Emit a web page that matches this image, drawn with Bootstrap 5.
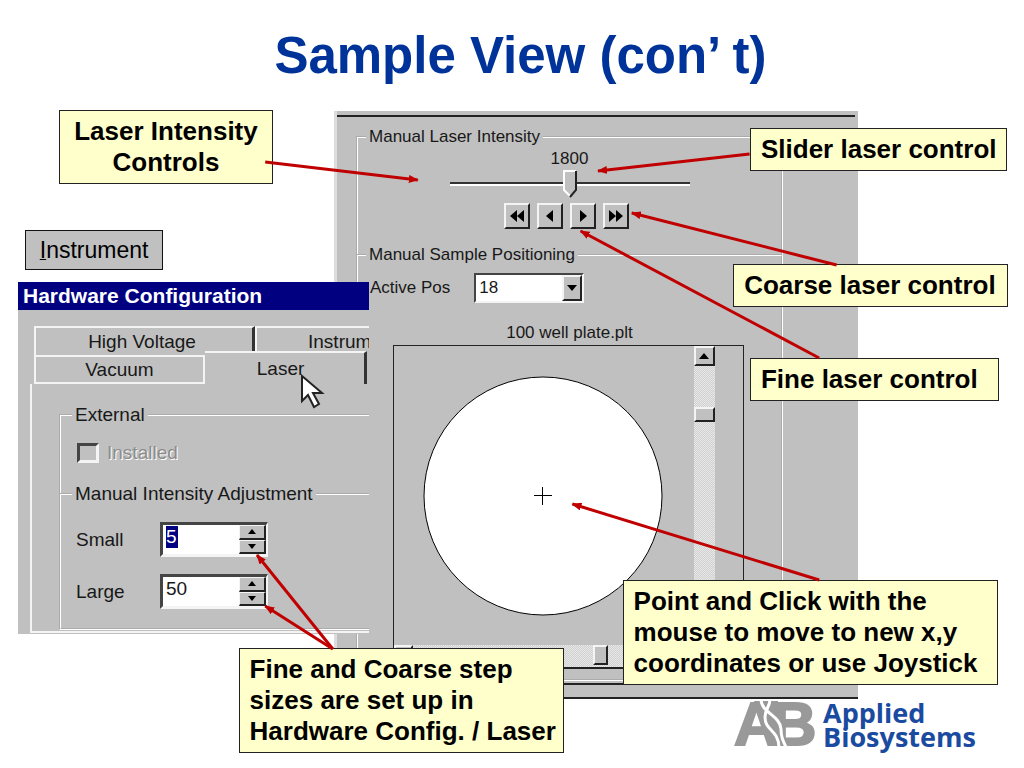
<!DOCTYPE html>
<html lang="en">
<head>
<meta charset="utf-8">
<meta name="viewport" content="width=device-width, initial-scale=1">
<title>Sample View (con’ t)</title>
<link rel="stylesheet" href="https://cdn.jsdelivr.net/npm/bootstrap@5.3.0/dist/css/bootstrap.min.css">
<style>
body { background: #fff; color: #000; font-family: "Liberation Sans", Arial, sans-serif; }
.slide { max-width: 1024px; min-height: 768px; overflow: hidden; }
.slide-title { color: #039; font-size: 51px; line-height: 60px; padding: 26px 0 0 17px; font-weight: 700; }

/* callouts */
.note { position: absolute; background: #ffc; border: 1px solid #222; padding: 5px 10px; font-size: 26px; line-height: 31px; font-weight: 700; white-space: nowrap; }
.note-intensity { left: 5.76%; top: 110px; width: 20.9%; }
.note-slider { left: 73.24%; top: 128px; width: 25.1%; }
.note-coarse { left: 71.6%; top: 264px; width: 26.8%; }
.note-fine { left: 73.24%; top: 358px; width: 24.3%; }
.note-point { left: 60.8%; top: 580px; width: 36.7%; }
.note-steps { left: 23.3%; top: 648px; width: 31.8%; }
.menu-key { position: absolute; left: 2.44%; top: 230px; width: 13.5%; height: 40px; background: silver; border: 1px solid #111; border-radius: 0; font-size: 23px; line-height: 36px; padding: 0; color: #000; }
.menu-key u { text-decoration-thickness: 1px; }
.pointers { left: 0; top: 0; height: 768px; pointer-events: none; }

/* shared window parts */
.pane { position: absolute; background: silver; overflow: hidden; color: #181818; }
.etched { border: 2px groove #fff; margin: 0; min-width: 0; padding: 0; }
.etched > legend { float: none; width: auto; margin: 0; }
.raised { background: silver; border: 2px solid; border-color: #f4f4f4 #222 #222 #f4f4f4; border-radius: 0; padding: 0; }
.sunken { background: #fff; border: 2px solid; border-color: #444 #f4f4f4 #f4f4f4 #444; border-radius: 0; }

/* sample view */
.sample { left: 32.62%; top: 111px; width: 51.17%; height: 588px; border-left: 3px solid #ddd; border-bottom: 2px solid #222; font-size: 17px; line-height: 20px; }
.sample-rule { border-top: 2px solid #222; margin: 4px 3px 0 0; }
.sample-foot { border-top: 2px solid #222; margin-top: 2px; }
.sample-body { padding: 10px 75px 0 19px; }
.sample legend { font-size: 17px; line-height: 20px; margin-left: 8px; padding: 0 3px; }
.laser-set { height: 128px; border-bottom: 0; }
.laser-body { padding-top: 2px; }
.position-set { margin-top: -10px; height: 436px; }
.laser-range { appearance: none; -webkit-appearance: none; width: 240px; height: 28px; background: none; display: block; margin-top: 1px; }
.laser-range::-webkit-slider-runnable-track { height: 4px; background: #333; border-bottom: 2px solid #fff; }
.laser-range::-webkit-slider-thumb { -webkit-appearance: none; width: 14px; height: 28px; margin-top: -12px; background: url("data:image/svg+xml,%3Csvg xmlns='http://www.w3.org/2000/svg' width='14' height='28'%3E%3Cpath d='M1 1H13V20L7 27L1 20Z' fill='silver'/%3E%3Cpath d='M13 1H1V20L7 26' fill='none' stroke='white' stroke-width='2'/%3E%3Cpath d='M13 1V20L7 27' fill='none' stroke='%23222' stroke-width='2'/%3E%3C/svg%3E"); }
.step-row { gap: 7px; margin: 5px 6px 0 0; }
.step-btn { width: 26px; height: 26px; display: grid; place-items: center; }
.pos-box { width: 110px; height: 30px; display: grid; grid-template-columns: 1fr 20px; }
.pos-box select { appearance: none; grid-area: 1 / 1 / 2 / 3; border: 0; background: none; font-size: 17px; padding: 0 3px; line-height: 24px; color: #181818; }
.pos-box .raised { grid-area: 1 / 2; pointer-events: none; display: grid; place-items: center; }
.plate { margin: 2px 37px 0 35px; height: 324px; border: 1px solid #222; border-bottom-width: 2px; display: grid; grid-template: 20px 1fr 22px / 19px 1fr 21px 28px; }
.plate-well { grid-area: 1 / 1 / 3 / 3; padding: 30px 0 0 29px; }
.track { background: repeating-conic-gradient(#d0d0d0 0 25%, #e8e8e8 0 50%) 0 0 / 2px 2px; }
.plate-up { grid-area: 1 / 3; display: grid; place-items: center; }
.plate-v { grid-area: 2 / 3; padding-top: 41px; }
.plate-left { grid-area: 3 / 1; }
.plate-h { grid-area: 3 / 2 / 4 / 4; padding-left: 180px; }
.plate-v .raised { height: 15px; }
.plate-h .raised { height: 20px; width: 15px; }

/* hardware configuration */
.hardware { left: 1.76%; top: 282px; width: 34.28%; height: 352px; font-size: 19px; line-height: 22px; }
.hardware-title { background: navy; color: #fff; font-size: 21px; line-height: 28px; height: 28px; padding-left: 5px; font-weight: 700; margin: 0; }
.tab-row { display: flex; margin-left: 16px; }
.tab-item { border: 2px solid #f4f4f4; border-width: 2px 0 0 2px; background: silver; color: #181818; padding: 0; height: 29px; white-space: nowrap; font-size: 19px; line-height: 24px; text-align: center; flex: none; }
.tab-high { width: 221px; border-right: 3px solid #333; padding-right: 4px; }
.tab-instr { width: 160px; text-align: left; padding-left: 51px; }
.tab-vacuum { width: 171px; border-right-width: 2px; border-bottom-width: 2px; }
.tab-laser { width: 162px; height: 33px; margin-top: -4px; border-left: 0; border-right: 3px solid #333; padding-right: 8px; }
.tab-page { border-left: 2px solid #f4f4f4; border-bottom: 2px solid #f4f4f4; margin-left: 12px; height: 249px; padding: 20px 0 0 27px; }
.tab-page .etched { border-right: 0; }
.tab-page legend { font-size: 19px; line-height: 22px; margin-left: 11px; padding: 0 3px; }
.external-set { height: 91px; border-bottom: 0; }
.adjust-set { margin-top: -12px; height: 147px; }
.check-line { padding: 16px 0 0 16px; color: #8c8c8c; text-shadow: 1px 1px #fff; }
.check-box { appearance: none; width: 22px; height: 20px; border-width: 3px; background: silver; margin: 0; }
.adjust-line { display: grid; grid-template-columns: 84px 108px; align-items: center; height: 35px; margin: 17px 0 0 15px; }
.spin { display: grid; grid-template: 1fr 1fr / 1fr 27px; height: 35px; border-width: 3px; border-right-width: 2px; }
.spin-field { grid-row: 1 / 3; display: grid; align-items: start; padding: 1px 0 0 3px; }
.spin input { border: 0; min-width: 0; width: 100%; padding: 0; font-size: 19px; line-height: 22px; height: 22px; background: none; color: #181818; }
.spin .picked { width: 12px; background: navy; color: #fff; }
.spin button { display: grid; place-items: center; border-width: 1px 2px 2px 1px; }
.spin svg, .step-btn svg { display: block; }
.cursor-arrow { left: 283px; top: 92px; }

.brand { position: absolute; left: 71.68%; top: 696px; }
.brand-mark { margin-top: -6px; }
.brand-name { color: #1a4ba0; font-family: "Open Sans", "Noto Sans", sans-serif; font-size: 27px; line-height: 24px; font-weight: 700; padding: 5px 0 0 4px; }
</style>
</head>
<body>
<main class="slide position-relative mx-auto">
  <h1 class="slide-title text-center m-0">Sample View (con’ t)</h1>

  <section class="pane sample" aria-label="Sample view">
    <div class="sample-rule"></div>
    <div class="sample-body">
      <fieldset class="etched laser-set">
        <legend>Manual Laser Intensity</legend>
        <div class="laser-body d-flex flex-column align-items-center">
          <label for="laser">1800</label>
          <input class="laser-range" id="laser" type="range" min="0" max="3600" value="1800">
          <div class="step-row d-flex">
            <button class="raised step-btn" aria-label="Coarse down"><svg width="16" height="14"><path d="M8 1V13L1 7ZM15 1V13L8 7Z"/></svg></button>
            <button class="raised step-btn" aria-label="Fine down"><svg width="16" height="14"><path d="M11 1V13L4 7Z"/></svg></button>
            <button class="raised step-btn" aria-label="Fine up"><svg width="16" height="14"><path d="M5 1V13L12 7Z"/></svg></button>
            <button class="raised step-btn" aria-label="Coarse up"><svg width="16" height="14"><path d="M1 1V13L8 7ZM8 1V13L15 7Z"/></svg></button>
          </div>
        </div>
      </fieldset>
      <fieldset class="etched position-set">
        <legend>Manual Sample Positioning</legend>
        <div class="d-flex align-items-center pt-2 ps-2 ms-1">
          <label for="pos" class="me-4">Active Pos</label>
          <div class="pos-box sunken"><select id="pos"><option>18</option></select><span class="raised"><svg width="10" height="6"><path d="M0 0H10L5 6Z"/></svg></span></div>
        </div>
        <p class="text-center m-0 mt-3 pt-1">100 well plate.plt</p>
        <div class="plate">
          <div class="plate-well"><svg width="240" height="240"><circle cx="120" cy="120" r="119" fill="#fff" stroke="#000"/><path d="M111 119.500H129M119.500 111V129" stroke="#000" fill="none"/></svg></div>
          <button class="raised plate-up" aria-label="Move up"><svg width="10" height="6"><path d="M0 6H10L5 0Z"/></svg></button>
          <div class="track plate-v"><div class="raised"></div></div>
          <button class="raised plate-left" aria-label="Move left"></button>
          <div class="track plate-h"><div class="raised"></div></div>
        </div>
      </fieldset>
    </div>
    <div class="sample-foot"></div>
  </section>

  <section class="pane hardware" aria-label="Hardware Configuration">
    <h2 class="hardware-title">Hardware Configuration</h2>
    <div class="tab-row mt-3"><button class="tab-item tab-high">High Voltage</button><button class="tab-item tab-instr">Instrum</button></div>
    <div class="tab-row"><button class="tab-item tab-vacuum">Vacuum</button><button class="tab-item tab-laser">Laser</button></div>
    <div class="tab-page">
      <fieldset class="etched external-set">
        <legend>External</legend>
        <div class="check-line d-flex align-items-center gap-2"><input class="check-box sunken" type="checkbox" id="inst" disabled><label for="inst">Installed</label></div>
      </fieldset>
      <fieldset class="etched adjust-set">
        <legend>Manual Intensity Adjustment</legend>
        <div class="adjust-line">
          <label for="small">Small</label>
          <div class="spin sunken"><div class="spin-field"><input class="picked" id="small" value="5"></div><button class="raised" aria-label="Small up"><svg width="8" height="5"><path d="M0 5H8L4 0Z"/></svg></button><button class="raised" aria-label="Small down"><svg width="8" height="5"><path d="M0 0H8L4 5Z"/></svg></button></div>
        </div>
        <div class="adjust-line">
          <label for="large">Large</label>
          <div class="spin sunken"><div class="spin-field"><input id="large" value="50"></div><button class="raised" aria-label="Large up"><svg width="8" height="5"><path d="M0 5H8L4 0Z"/></svg></button><button class="raised" aria-label="Large down"><svg width="8" height="5"><path d="M0 0H8L4 5Z"/></svg></button></div>
        </div>
      </fieldset>
    </div>
    <svg class="cursor-arrow position-absolute" width="24" height="36"><path d="M1 2V27L7 21L13 33L18 30L12 19H21Z" fill="#fff" stroke="#222" stroke-width="2"/></svg>
  </section>

  <button class="menu-key"><u>I</u>nstrument</button>

  <div class="note note-intensity text-center">Laser Intensity<br>Controls</div>
  <div class="note note-slider">Slider laser control</div>
  <div class="note note-coarse">Coarse laser control</div>
  <div class="note note-fine">Fine laser control</div>
  <div class="note note-point">Point and Click with the<br>mouse to move to new x,y<br>coordinates or use Joystick</div>
  <div class="note note-steps">Fine and Coarse step<br>sizes are set up in<br>Hardware Config. / Laser</div>

  <svg class="pointers position-absolute w-100" aria-hidden="true">
    <defs><marker id="tip" viewBox="0 0 10 8" refX="9" refY="4" markerWidth="10" markerHeight="8" markerUnits="userSpaceOnUse" orient="auto"><path d="M0 0L10 4L0 8Z" fill="#c00000"/></marker></defs>
    <g stroke="#c00000" stroke-width="3">
      <line x1="25.9%" y1="162" x2="40.8%" y2="180" marker-end="url(#tip)"/>
      <line x1="73.2%" y1="154" x2="58.4%" y2="171" marker-end="url(#tip)"/>
      <line x1="81.7%" y1="265" x2="61.7%" y2="213" marker-end="url(#tip)"/>
      <line x1="80%" y1="358" x2="56.7%" y2="231" marker-end="url(#tip)"/>
      <line x1="80%" y1="580" x2="55.9%" y2="504" marker-end="url(#tip)"/>
      <line x1="32.5%" y1="649" x2="25.1%" y2="555" marker-end="url(#tip)"/>
      <line x1="32.5%" y1="649" x2="25.9%" y2="606" marker-end="url(#tip)"/>
    </g>
  </svg>

  <div class="brand d-flex align-items-start">
    <svg class="brand-mark" width="85" height="72" role="img" aria-label="AB"><g fill="#999" stroke="#999" stroke-width="2" font-family="Liberation Sans" font-weight="700" font-size="62"><text y="55">A<tspan dx="-7">B</tspan></text></g><path d="M20 11H44V56H38Z" fill="#999"/><g fill="none" stroke="#fff" stroke-width="3"><path d="M27 9C27 23 46 25 47 39C47 47 49 51 52 57"/><path d="M36 9C36 17 31 19 31 27C31 41 44 39 45 57"/></g></svg>
    <div class="brand-name">Applied<br>Biosystems</div>
  </div>
</main>
<script src="https://cdn.jsdelivr.net/npm/bootstrap@5.3.0/dist/js/bootstrap.bundle.min.js"></script>
</body>
</html>
